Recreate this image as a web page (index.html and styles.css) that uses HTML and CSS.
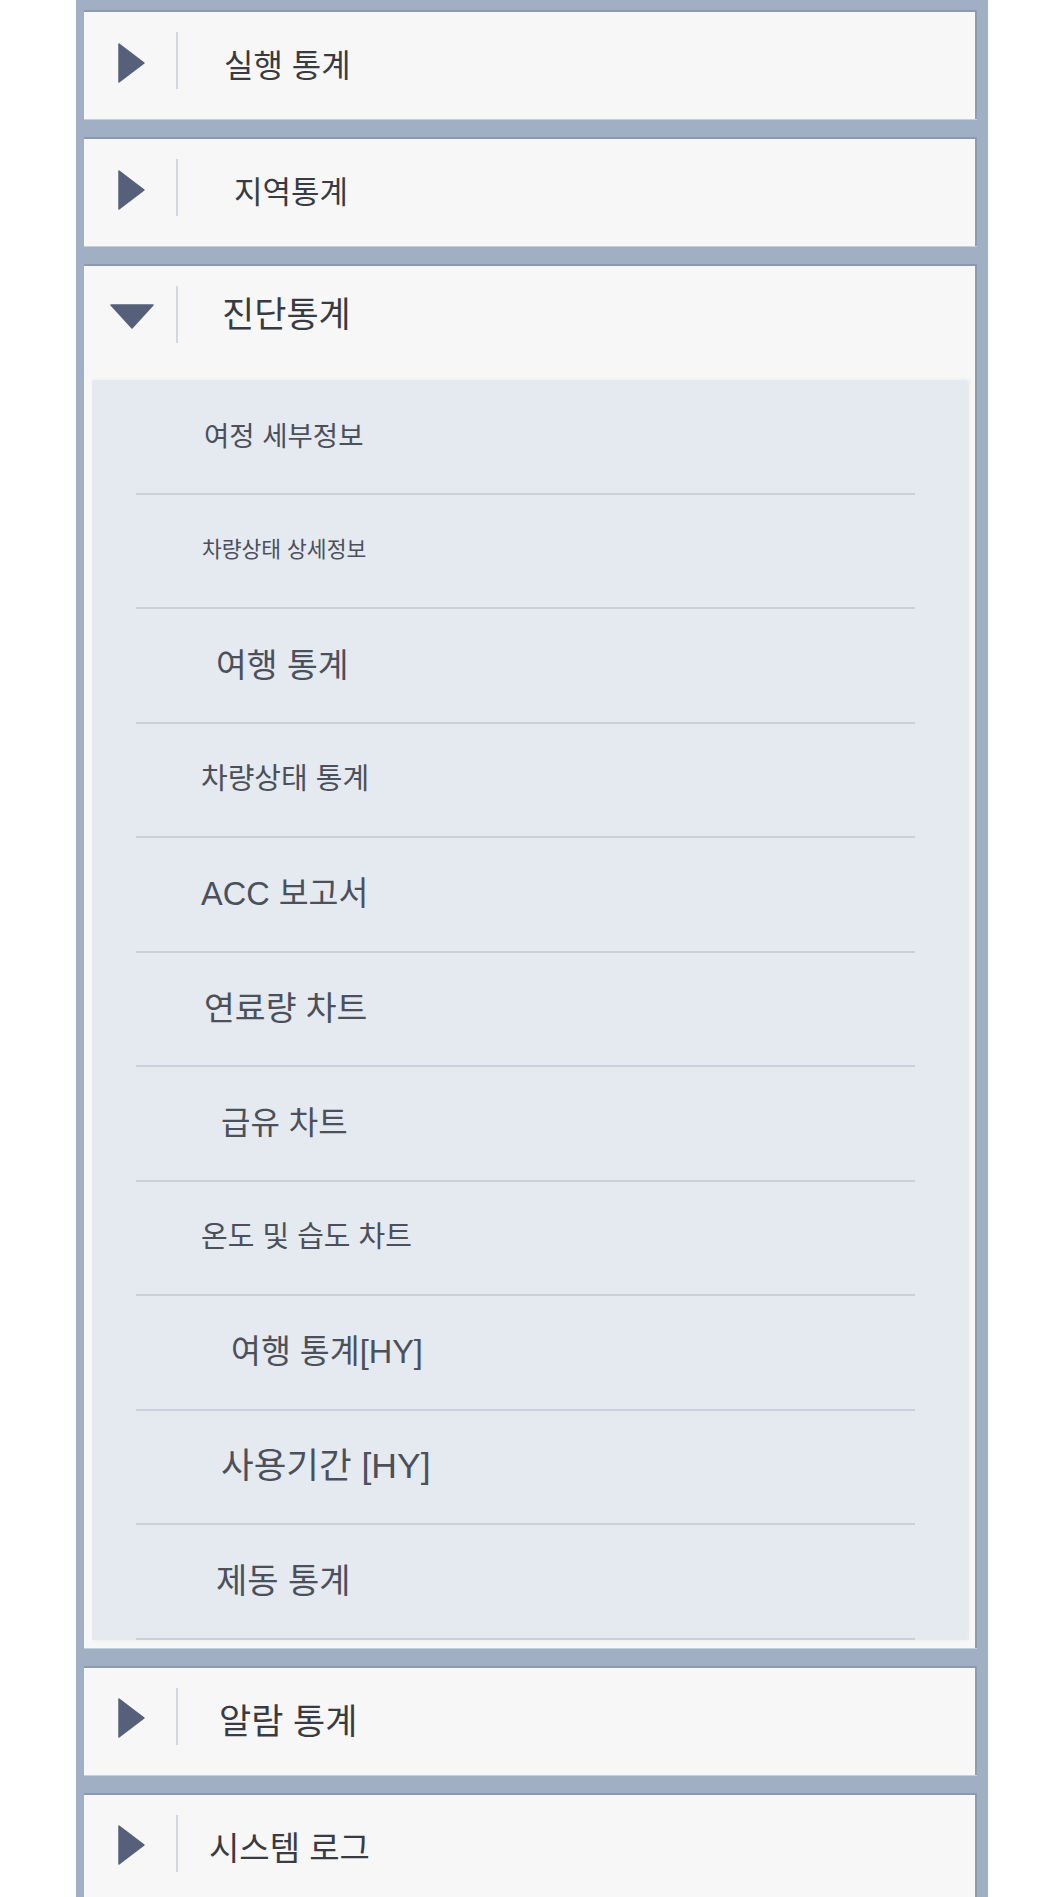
FILE: index.html
```html
<!DOCTYPE html>
<html lang="ko">
<head>
  <meta charset="UTF-8">
  <meta name="viewport" content="width=device-width, initial-scale=1.0">
  <title>통계 메뉴</title>
  <link rel="stylesheet" href="styles.css">
</head>
<body>
  <div class="menu">
    <div class="panel">
      <div class="panel-head">
        <span class="arrow"><svg width="27" height="40" viewBox="0 0 27 40"><polygon points="1,1 26,20 1,39" /></svg></span>
        <span class="divider"></span>
        <span class="title t-run">실행 통계</span>
      </div>
    </div>

    <div class="panel">
      <div class="panel-head">
        <span class="arrow"><svg width="27" height="40" viewBox="0 0 27 40"><polygon points="1,1 26,20 1,39" /></svg></span>
        <span class="divider"></span>
        <span class="title t-region">지역통계</span>
      </div>
    </div>

    <div class="panel open">
      <div class="panel-head">
        <span class="arrow"><svg width="44" height="25" viewBox="0 0 44 25"><polygon points="1,1 43,1 22,24" /></svg></span>
        <span class="divider"></span>
        <span class="title t-diag">진단통계</span>
      </div>
      <ul class="submenu">
        <li class="item i-1">여정 세부정보</li>
        <li class="item i-2">차량상태 상세정보</li>
        <li class="item i-3">여행 통계</li>
        <li class="item i-4">차량상태 통계</li>
        <li class="item i-5">ACC 보고서</li>
        <li class="item i-6">연료량 차트</li>
        <li class="item i-7">급유 차트</li>
        <li class="item i-8">온도 및 습도 차트</li>
        <li class="item i-9">여행 통계[HY]</li>
        <li class="item i-10">사용기간 [HY]</li>
        <li class="item i-11">제동 통계</li>
      </ul>
    </div>

    <div class="panel">
      <div class="panel-head">
        <span class="arrow"><svg width="27" height="40" viewBox="0 0 27 40"><polygon points="1,1 26,20 1,39" /></svg></span>
        <span class="divider"></span>
        <span class="title t-alarm">알람 통계</span>
      </div>
    </div>

    <div class="panel">
      <div class="panel-head">
        <span class="arrow"><svg width="27" height="40" viewBox="0 0 27 40"><polygon points="1,1 26,20 1,39" /></svg></span>
        <span class="divider"></span>
        <span class="title t-log">시스템 로그</span>
      </div>
    </div>
  </div>
</body>
</html>
```

FILE: styles.css
```css
body { margin: 0; background: #fff; font-family: "Liberation Sans", "Noto Sans CJK KR", sans-serif; }

.menu { width: 912px; margin-left: 76px; padding: 10px 11px 0 8px; box-sizing: border-box; background: #a1afc5; display: flex; flex-direction: column; gap: 18px; min-height: 1897px; }

.panel { background: #f7f7f8; border-top: 2px solid #8c99ae; border-right: 2px solid #8f9bb0; box-shadow: 0 1px 0 #c4cedc; }
.panel-head { height: 107px; display: flex; align-items: center; }
.arrow { width: 51px; margin-left: 22px; display: flex; justify-content: center; align-items: center; margin-top: -6px; }
.arrow polygon { fill: #56607a; stroke: #56607a; stroke-width: 1.5; stroke-linejoin: round; }
.divider { width: 2px; height: 57px; background: #d3d7de; margin-left: 19px; margin-top: -10px; }
.title { color: #383b42; line-height: 1; }

.t-run { font-size: 32px; margin-left: 46px; }
.t-region { font-size: 31px; margin-left: 56px; }
.t-diag { font-size: 35px; margin-left: 44px; margin-top: -10px; }
.t-alarm { font-size: 35px; margin-left: 41px; }
.t-log { font-size: 33px; margin-left: 31px; }

.submenu { list-style: none; margin: 7px 8px 8px 8px; padding: 0; background: #e5e9f0; box-shadow: 2px 0 3px rgba(120, 120, 120, 0.12); }
.item { height: 114.5px; box-sizing: border-box; margin: 0 52px 0 44px; border-bottom: 2px solid #c9d0da; display: flex; align-items: center; padding-left: 68px; color: #4b505b; line-height: 1; }

.i-1 { font-size: 27.5px; }
.i-2 { font-size: 21.5px; padding-left: 66px; }
.i-3 { font-size: 33.5px; padding-left: 80px; }
.i-4 { font-size: 29px; padding-left: 65px; }
.i-5 { font-size: 32.5px; padding-left: 65px; }
.i-6 { font-size: 33.5px; }
.i-7 { font-size: 32px; padding-left: 85px; }
.i-8 { font-size: 29px; padding-left: 65px; }
.i-9 { font-size: 32.5px; padding-left: 95px; }
.i-10 { font-size: 35.5px; padding-left: 85px; }
.i-11 { font-size: 34px; padding-left: 80px; }
```
